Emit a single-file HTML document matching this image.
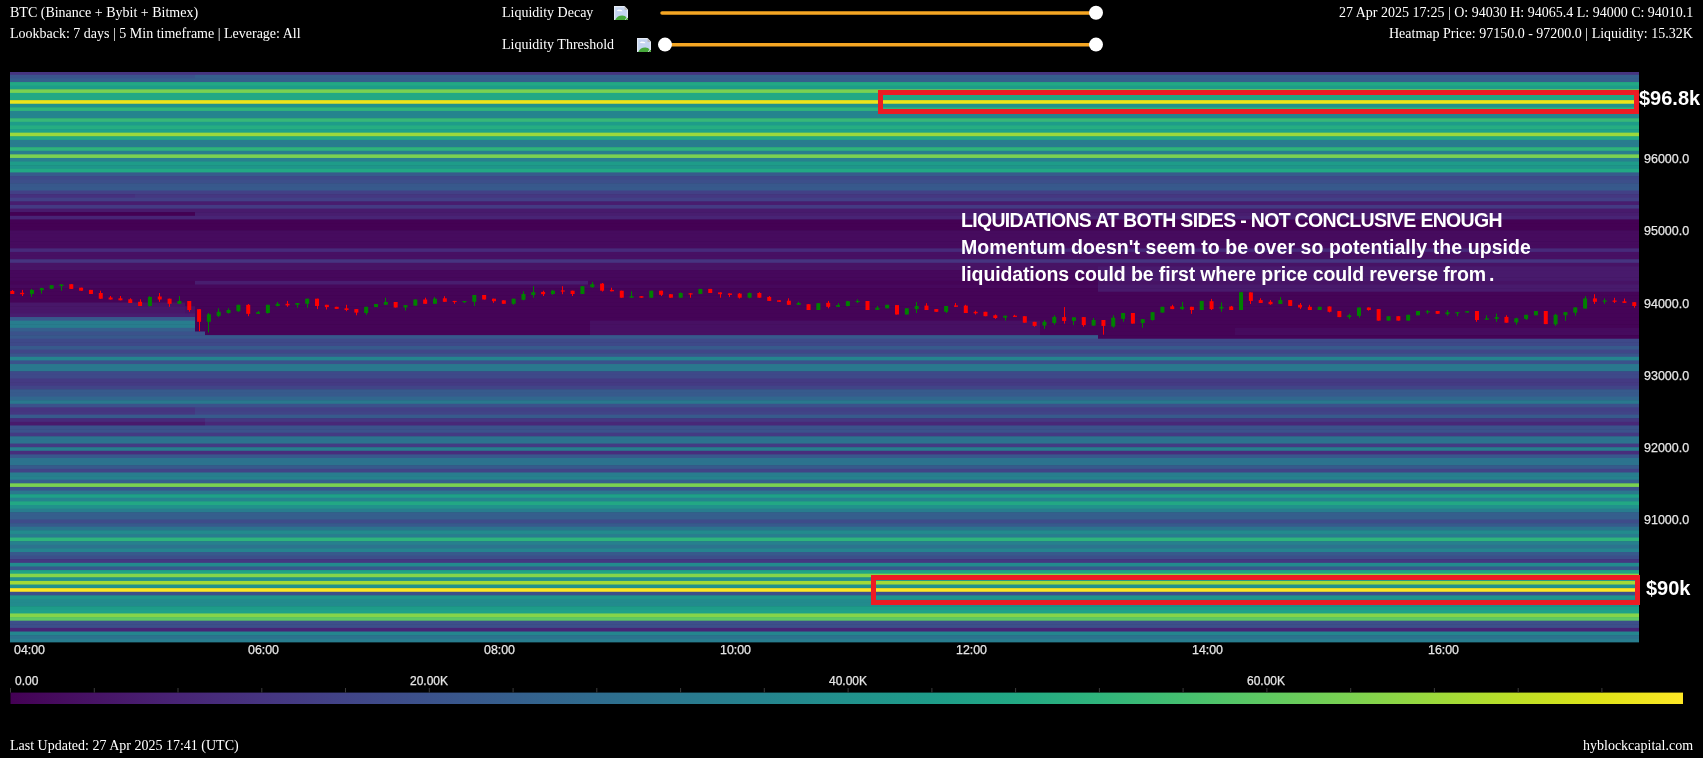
<!DOCTYPE html>
<html><head><meta charset="utf-8">
<style>
html,body{margin:0;padding:0;background:#000;}
body{width:1703px;height:758px;overflow:hidden;position:relative;}
.t{position:absolute;white-space:nowrap;color:#fff;font-family:"Liberation Serif",serif;font-size:14px;line-height:16px;}
.ax{position:absolute;white-space:nowrap;color:#e6e6e6;font-family:"Liberation Sans",sans-serif;font-size:12px;line-height:14px;-webkit-text-stroke:0.25px #e6e6e6;}
.ann{position:absolute;white-space:nowrap;color:#fff;font-family:"Liberation Sans",sans-serif;font-weight:bold;font-size:19.5px;line-height:20px;}
svg{position:absolute;left:0;top:0;}
.t,.ax,.ann{will-change:transform;}
</style></head><body>
<svg width="1703" height="758" viewBox="0 0 1703 758">
<defs><linearGradient id="cb" x1="0" x2="1" y1="0" y2="0"><stop offset="0.000" stop-color="#440154"/><stop offset="0.050" stop-color="#471365"/><stop offset="0.100" stop-color="#482475"/><stop offset="0.150" stop-color="#463480"/><stop offset="0.200" stop-color="#414487"/><stop offset="0.250" stop-color="#3b528b"/><stop offset="0.300" stop-color="#355f8d"/><stop offset="0.350" stop-color="#2f6c8e"/><stop offset="0.400" stop-color="#2a788e"/><stop offset="0.450" stop-color="#25848e"/><stop offset="0.500" stop-color="#21918c"/><stop offset="0.550" stop-color="#1e9c89"/><stop offset="0.600" stop-color="#22a884"/><stop offset="0.650" stop-color="#2fb47c"/><stop offset="0.700" stop-color="#44bf70"/><stop offset="0.750" stop-color="#5ec962"/><stop offset="0.800" stop-color="#7ad151"/><stop offset="0.850" stop-color="#9bd93c"/><stop offset="0.900" stop-color="#bddf26"/><stop offset="0.950" stop-color="#dfe318"/><stop offset="1.000" stop-color="#fde725"/></linearGradient></defs>
<g>
<rect x="10" y="72.00" width="1629" height="3.41" fill="#463480"/>
<rect x="10" y="74.81" width="185.3" height="4.22" fill="#3a548c"/>
<rect x="195" y="74.81" width="1444" height="4.22" fill="#355f8d"/>
<rect x="10" y="78.43" width="1629" height="4.21" fill="#355f8d"/>
<rect x="10" y="82.05" width="1629" height="4.21" fill="#22a884"/>
<rect x="10" y="85.66" width="1629" height="4.22" fill="#1e9c89"/>
<rect x="10" y="89.28" width="1629" height="4.21" fill="#7ad151"/>
<rect x="10" y="92.89" width="1629" height="4.21" fill="#22a884"/>
<rect x="10" y="96.50" width="1629" height="4.22" fill="#22a884"/>
<rect x="10" y="100.12" width="1629" height="4.22" fill="#ece51b"/>
<rect x="10" y="103.74" width="1629" height="4.21" fill="#21918c"/>
<rect x="10" y="107.35" width="1629" height="4.21" fill="#2fb47c"/>
<rect x="10" y="110.97" width="1629" height="4.22" fill="#25848e"/>
<rect x="10" y="114.58" width="1629" height="4.21" fill="#25848e"/>
<rect x="10" y="118.20" width="1629" height="4.21" fill="#37b878"/>
<rect x="10" y="121.81" width="1629" height="4.22" fill="#1e9c89"/>
<rect x="10" y="125.43" width="1629" height="4.22" fill="#26ad81"/>
<rect x="10" y="129.04" width="1629" height="4.21" fill="#1fa188"/>
<rect x="10" y="132.66" width="1629" height="4.22" fill="#9bd93c"/>
<rect x="10" y="136.27" width="1629" height="4.21" fill="#22a884"/>
<rect x="10" y="139.88" width="1629" height="4.22" fill="#287d8e"/>
<rect x="10" y="143.50" width="1629" height="4.22" fill="#287d8e"/>
<rect x="10" y="147.12" width="1629" height="4.22" fill="#2fb47c"/>
<rect x="10" y="150.73" width="1629" height="4.22" fill="#287d8e"/>
<rect x="10" y="154.35" width="1629" height="4.21" fill="#7ad151"/>
<rect x="10" y="157.96" width="1629" height="4.21" fill="#27808e"/>
<rect x="10" y="161.57" width="1629" height="4.22" fill="#1e9c89"/>
<rect x="10" y="165.19" width="1629" height="4.22" fill="#1f958b"/>
<rect x="10" y="168.81" width="1629" height="4.22" fill="#22a884"/>
<rect x="10" y="172.42" width="1629" height="4.22" fill="#375a8c"/>
<rect x="10" y="176.04" width="1629" height="4.21" fill="#3e4989"/>
<rect x="10" y="179.65" width="1629" height="4.22" fill="#3c4f8a"/>
<rect x="10" y="183.27" width="1629" height="4.21" fill="#38588c"/>
<rect x="10" y="186.88" width="1629" height="4.22" fill="#375a8c"/>
<rect x="10" y="190.50" width="1629" height="4.22" fill="#424086"/>
<rect x="10" y="194.11" width="125.3" height="4.22" fill="#46307e"/>
<rect x="135" y="194.11" width="1504" height="4.22" fill="#453781"/>
<rect x="10" y="197.73" width="1629" height="4.22" fill="#424086"/>
<rect x="10" y="201.34" width="1629" height="4.21" fill="#481d6f"/>
<rect x="10" y="204.95" width="1629" height="4.22" fill="#443a83"/>
<rect x="10" y="208.57" width="1629" height="4.22" fill="#481a6c"/>
<rect x="10" y="212.19" width="185.3" height="4.22" fill="#440154"/>
<rect x="195" y="212.19" width="1444" height="4.22" fill="#481d6f"/>
<rect x="10" y="215.80" width="1629" height="4.22" fill="#482475"/>
<rect x="10" y="219.42" width="1629" height="4.22" fill="#440154"/>
<rect x="10" y="223.03" width="1629" height="4.22" fill="#440154"/>
<rect x="10" y="226.65" width="1629" height="4.21" fill="#440154"/>
<rect x="10" y="230.26" width="1629" height="4.22" fill="#460b5e"/>
<rect x="10" y="233.88" width="1629" height="4.22" fill="#460b5e"/>
<rect x="10" y="237.49" width="1629" height="4.22" fill="#460b5e"/>
<rect x="10" y="241.11" width="1629" height="4.22" fill="#460b5e"/>
<rect x="10" y="244.72" width="1629" height="4.22" fill="#460b5e"/>
<rect x="10" y="248.34" width="1629" height="4.21" fill="#472a7a"/>
<rect x="10" y="251.95" width="1629" height="4.22" fill="#471063"/>
<rect x="10" y="255.56" width="1629" height="4.22" fill="#471063"/>
<rect x="10" y="259.18" width="1629" height="4.22" fill="#463480"/>
<rect x="10" y="262.80" width="1629" height="4.22" fill="#471365"/>
<rect x="10" y="266.41" width="1088.3" height="4.22" fill="#471365"/>
<rect x="1098" y="266.41" width="541" height="4.22" fill="#481a6c"/>
<rect x="10" y="270.03" width="1088.3" height="4.21" fill="#46085c"/>
<rect x="1098" y="270.03" width="541" height="4.21" fill="#481a6c"/>
<rect x="10" y="273.64" width="1088.3" height="4.22" fill="#46085c"/>
<rect x="1098" y="273.64" width="541" height="4.22" fill="#481a6c"/>
<rect x="10" y="277.25" width="1088.3" height="4.22" fill="#46085c"/>
<rect x="1098" y="277.25" width="541" height="4.22" fill="#481a6c"/>
<rect x="10" y="280.87" width="185.3" height="4.22" fill="#450457"/>
<rect x="195" y="280.87" width="393.3" height="4.22" fill="#481d6f"/>
<rect x="588" y="280.87" width="510.3" height="4.22" fill="#450457"/>
<rect x="1098" y="280.87" width="541" height="4.22" fill="#471365"/>
<rect x="10" y="284.49" width="1088.3" height="4.22" fill="#46085c"/>
<rect x="1098" y="284.49" width="541" height="4.22" fill="#481a6c"/>
<rect x="10" y="288.10" width="1088.3" height="4.22" fill="#450457"/>
<rect x="1098" y="288.10" width="541" height="4.22" fill="#481a6c"/>
<rect x="10" y="291.72" width="1629" height="4.22" fill="#450457"/>
<rect x="10" y="295.33" width="1629" height="4.21" fill="#450457"/>
<rect x="10" y="298.94" width="1629" height="4.22" fill="#450457"/>
<rect x="10" y="302.56" width="130.3" height="4.22" fill="#481769"/>
<rect x="140" y="302.56" width="45.3" height="4.22" fill="#471365"/>
<rect x="185" y="302.56" width="1454" height="4.22" fill="#450457"/>
<rect x="10" y="306.18" width="175.3" height="4.22" fill="#481769"/>
<rect x="185" y="306.18" width="10.3" height="4.22" fill="#471365"/>
<rect x="195" y="306.18" width="1444" height="4.22" fill="#450457"/>
<rect x="10" y="309.79" width="175.3" height="4.22" fill="#481769"/>
<rect x="185" y="309.79" width="10.3" height="4.22" fill="#471365"/>
<rect x="195" y="309.79" width="1444" height="4.22" fill="#450457"/>
<rect x="10" y="313.41" width="185.3" height="4.22" fill="#481d6f"/>
<rect x="195" y="313.41" width="1444" height="4.22" fill="#450457"/>
<rect x="10" y="317.02" width="185.3" height="4.21" fill="#38588c"/>
<rect x="195" y="317.02" width="1444" height="4.21" fill="#450457"/>
<rect x="10" y="320.63" width="185.3" height="4.22" fill="#287d8e"/>
<rect x="195" y="320.63" width="395.3" height="4.22" fill="#450457"/>
<rect x="590" y="320.63" width="450.3" height="4.22" fill="#471063"/>
<rect x="1040" y="320.63" width="599" height="4.22" fill="#450457"/>
<rect x="10" y="324.25" width="185.3" height="4.22" fill="#287d8e"/>
<rect x="195" y="324.25" width="395.3" height="4.22" fill="#450457"/>
<rect x="590" y="324.25" width="450.3" height="4.22" fill="#471063"/>
<rect x="1040" y="324.25" width="599" height="4.22" fill="#450457"/>
<rect x="10" y="327.87" width="185.3" height="4.22" fill="#355f8d"/>
<rect x="195" y="327.87" width="395.3" height="4.22" fill="#450457"/>
<rect x="590" y="327.87" width="450.3" height="4.22" fill="#471063"/>
<rect x="1040" y="327.87" width="195.3" height="4.22" fill="#450457"/>
<rect x="1235" y="327.87" width="404" height="4.22" fill="#460b5e"/>
<rect x="10" y="331.48" width="195.3" height="4.22" fill="#3b528b"/>
<rect x="205" y="331.48" width="385.3" height="4.22" fill="#450457"/>
<rect x="590" y="331.48" width="450.3" height="4.22" fill="#471063"/>
<rect x="1040" y="331.48" width="195.3" height="4.22" fill="#450457"/>
<rect x="1235" y="331.48" width="404" height="4.22" fill="#460b5e"/>
<rect x="10" y="335.10" width="1088.3" height="4.21" fill="#38588c"/>
<rect x="1098" y="335.10" width="541" height="4.21" fill="#450457"/>
<rect x="10" y="338.71" width="1629" height="4.22" fill="#3e4989"/>
<rect x="10" y="342.32" width="1629" height="4.22" fill="#3e4989"/>
<rect x="10" y="345.94" width="1629" height="4.22" fill="#375a8c"/>
<rect x="10" y="349.56" width="1629" height="4.22" fill="#404688"/>
<rect x="10" y="353.17" width="1629" height="4.22" fill="#3a548c"/>
<rect x="10" y="356.79" width="1629" height="4.22" fill="#25848e"/>
<rect x="10" y="360.40" width="1629" height="4.21" fill="#3b528b"/>
<rect x="10" y="364.01" width="1629" height="4.22" fill="#2a788e"/>
<rect x="10" y="367.63" width="1629" height="4.22" fill="#2a788e"/>
<rect x="10" y="371.25" width="1629" height="4.22" fill="#3e4989"/>
<rect x="10" y="374.86" width="1629" height="4.22" fill="#3e4989"/>
<rect x="10" y="378.48" width="1629" height="4.22" fill="#443a83"/>
<rect x="10" y="382.09" width="1629" height="4.21" fill="#443a83"/>
<rect x="10" y="385.70" width="1629" height="4.22" fill="#414487"/>
<rect x="10" y="389.32" width="1629" height="4.22" fill="#375a8c"/>
<rect x="10" y="392.94" width="1629" height="4.22" fill="#375a8c"/>
<rect x="10" y="396.55" width="1629" height="4.22" fill="#31678e"/>
<rect x="10" y="400.17" width="1629" height="4.22" fill="#2a788e"/>
<rect x="10" y="403.78" width="1629" height="4.21" fill="#3b528b"/>
<rect x="10" y="407.39" width="185.3" height="4.22" fill="#463480"/>
<rect x="195" y="407.39" width="1444" height="4.22" fill="#424086"/>
<rect x="10" y="411.01" width="185.3" height="4.22" fill="#453781"/>
<rect x="195" y="411.01" width="1444" height="4.22" fill="#414487"/>
<rect x="10" y="414.62" width="1629" height="4.22" fill="#375a8c"/>
<rect x="10" y="418.24" width="195.3" height="4.22" fill="#472a7a"/>
<rect x="205" y="418.24" width="1434" height="4.22" fill="#453781"/>
<rect x="10" y="421.86" width="195.3" height="4.22" fill="#481a6c"/>
<rect x="205" y="421.86" width="1434" height="4.22" fill="#482878"/>
<rect x="10" y="425.47" width="1629" height="4.22" fill="#3b528b"/>
<rect x="10" y="429.09" width="1629" height="4.21" fill="#3b528b"/>
<rect x="10" y="432.70" width="1629" height="4.22" fill="#443a83"/>
<rect x="10" y="436.31" width="1629" height="4.22" fill="#2c738e"/>
<rect x="10" y="439.93" width="1629" height="4.22" fill="#2c738e"/>
<rect x="10" y="443.55" width="1629" height="4.22" fill="#443a83"/>
<rect x="10" y="447.16" width="1629" height="4.22" fill="#287d8e"/>
<rect x="10" y="450.78" width="1629" height="4.21" fill="#472e7c"/>
<rect x="10" y="454.39" width="1629" height="4.22" fill="#38588c"/>
<rect x="10" y="458.00" width="1629" height="4.22" fill="#2c738e"/>
<rect x="10" y="461.62" width="1629" height="4.22" fill="#2c738e"/>
<rect x="10" y="465.24" width="1629" height="4.22" fill="#375a8c"/>
<rect x="10" y="468.85" width="1629" height="4.22" fill="#414487"/>
<rect x="10" y="472.47" width="1629" height="4.21" fill="#287d8e"/>
<rect x="10" y="476.08" width="1629" height="4.22" fill="#26828e"/>
<rect x="10" y="479.69" width="1629" height="4.22" fill="#355f8d"/>
<rect x="10" y="483.31" width="1629" height="4.22" fill="#7ad151"/>
<rect x="10" y="486.93" width="1629" height="4.22" fill="#3b528b"/>
<rect x="10" y="490.54" width="1629" height="4.22" fill="#2a788e"/>
<rect x="10" y="494.16" width="1629" height="4.22" fill="#1fa188"/>
<rect x="10" y="497.77" width="1629" height="4.21" fill="#25848e"/>
<rect x="10" y="501.38" width="1629" height="4.22" fill="#22a884"/>
<rect x="10" y="505.00" width="1629" height="4.22" fill="#21918c"/>
<rect x="10" y="508.62" width="1629" height="4.22" fill="#287d8e"/>
<rect x="10" y="512.23" width="1629" height="4.22" fill="#355f8d"/>
<rect x="10" y="515.85" width="1629" height="4.22" fill="#355f8d"/>
<rect x="10" y="519.46" width="1629" height="4.22" fill="#3e4c8a"/>
<rect x="10" y="523.08" width="1629" height="4.22" fill="#375a8c"/>
<rect x="10" y="526.69" width="1629" height="4.22" fill="#2c738e"/>
<rect x="10" y="530.31" width="1629" height="4.22" fill="#228b8d"/>
<rect x="10" y="533.92" width="1629" height="4.22" fill="#287d8e"/>
<rect x="10" y="537.54" width="1629" height="4.22" fill="#2fb47c"/>
<rect x="10" y="541.15" width="1629" height="4.22" fill="#27808e"/>
<rect x="10" y="544.77" width="1629" height="4.21" fill="#2c738e"/>
<rect x="10" y="548.38" width="1629" height="4.22" fill="#25848e"/>
<rect x="10" y="552.00" width="1629" height="4.22" fill="#375a8c"/>
<rect x="10" y="555.61" width="1629" height="4.22" fill="#3c4f8a"/>
<rect x="10" y="559.23" width="1629" height="4.22" fill="#453781"/>
<rect x="10" y="562.84" width="1629" height="4.22" fill="#228b8d"/>
<rect x="10" y="566.46" width="1629" height="4.22" fill="#38588c"/>
<rect x="10" y="570.07" width="1629" height="4.22" fill="#20a386"/>
<rect x="10" y="573.69" width="1629" height="4.22" fill="#86d549"/>
<rect x="10" y="577.30" width="1629" height="4.22" fill="#21918c"/>
<rect x="10" y="580.92" width="1629" height="4.22" fill="#a2da37"/>
<rect x="10" y="584.53" width="1629" height="4.22" fill="#21918c"/>
<rect x="10" y="588.15" width="1629" height="4.22" fill="#fde725"/>
<rect x="10" y="591.76" width="1629" height="4.22" fill="#3c4f8a"/>
<rect x="10" y="595.38" width="1629" height="4.22" fill="#1f958b"/>
<rect x="10" y="598.99" width="1629" height="4.22" fill="#228b8d"/>
<rect x="10" y="602.61" width="1629" height="4.21" fill="#228b8d"/>
<rect x="10" y="606.22" width="1629" height="4.22" fill="#1e9c89"/>
<rect x="10" y="609.84" width="1629" height="4.22" fill="#1fa188"/>
<rect x="10" y="613.45" width="1629" height="4.22" fill="#86d549"/>
<rect x="10" y="617.07" width="1629" height="4.22" fill="#5ec962"/>
<rect x="10" y="620.68" width="1629" height="4.22" fill="#3c4f8a"/>
<rect x="10" y="624.30" width="1629" height="4.22" fill="#3c4f8a"/>
<rect x="10" y="627.91" width="1629" height="4.22" fill="#482475"/>
<rect x="10" y="631.53" width="1629" height="4.22" fill="#24868e"/>
<rect x="10" y="635.14" width="1629" height="4.22" fill="#2c738e"/>
<rect x="10" y="638.76" width="1629" height="3.62" fill="#287d8e"/>
</g>
<g>
<rect x="12" y="290.0" width="1" height="4.0" fill="#ff0000"/>
<rect x="10.30" y="291.0" width="4" height="3.0" fill="#ff0000"/>
<rect x="22" y="289.9" width="1" height="6.1" fill="#ff0000"/>
<rect x="20.13" y="292.8" width="4" height="1.4" fill="#ff0000"/>
<rect x="31" y="288.9" width="1" height="8.0" fill="#008000"/>
<rect x="29.96" y="289.9" width="4" height="4.0" fill="#008000"/>
<rect x="41" y="287.7" width="1" height="5.9" fill="#008000"/>
<rect x="39.79" y="288.1" width="4" height="2.2" fill="#008000"/>
<rect x="51" y="285.2" width="1" height="3.5" fill="#008000"/>
<rect x="49.62" y="285.2" width="4" height="3.5" fill="#008000"/>
<rect x="61" y="284.2" width="1" height="6.5" fill="#008000"/>
<rect x="59.45" y="284.5" width="4" height="1.5" fill="#008000"/>
<rect x="71" y="284.2" width="1" height="4.7" fill="#ff0000"/>
<rect x="69.28" y="284.2" width="4" height="4.7" fill="#ff0000"/>
<rect x="81" y="287.7" width="1" height="3.0" fill="#ff0000"/>
<rect x="79.11" y="287.7" width="4" height="3.0" fill="#ff0000"/>
<rect x="90" y="289.9" width="1" height="4.1" fill="#ff0000"/>
<rect x="88.94" y="289.9" width="4" height="4.1" fill="#ff0000"/>
<rect x="100" y="290.7" width="1" height="8.0" fill="#ff0000"/>
<rect x="98.77" y="293.0" width="4" height="5.7" fill="#ff0000"/>
<rect x="110" y="296.0" width="1" height="3.5" fill="#ff0000"/>
<rect x="108.60" y="297.5" width="4" height="2.0" fill="#ff0000"/>
<rect x="120" y="296.0" width="1" height="4.3" fill="#ff0000"/>
<rect x="118.43" y="298.3" width="4" height="2.0" fill="#ff0000"/>
<rect x="130" y="298.3" width="1" height="4.7" fill="#ff0000"/>
<rect x="128.26" y="299.3" width="4" height="3.7" fill="#ff0000"/>
<rect x="140" y="299.3" width="1" height="6.7" fill="#ff0000"/>
<rect x="138.09" y="301.8" width="4" height="4.2" fill="#ff0000"/>
<rect x="149" y="296.2" width="1" height="10.3" fill="#008000"/>
<rect x="147.92" y="296.9" width="4" height="9.1" fill="#008000"/>
<rect x="159" y="293.0" width="1" height="8.8" fill="#ff0000"/>
<rect x="157.75" y="296.5" width="4" height="3.0" fill="#ff0000"/>
<rect x="169" y="298.7" width="1" height="8.1" fill="#ff0000"/>
<rect x="167.58" y="298.7" width="4" height="5.1" fill="#ff0000"/>
<rect x="179" y="296.0" width="1" height="7.8" fill="#008000"/>
<rect x="177.41" y="301.0" width="4" height="2.8" fill="#008000"/>
<rect x="189" y="301.0" width="1" height="10.8" fill="#ff0000"/>
<rect x="187.24" y="301.0" width="4" height="9.0" fill="#ff0000"/>
<rect x="199" y="309.2" width="1" height="22.0" fill="#ff0000"/>
<rect x="197.07" y="309.2" width="4" height="12.6" fill="#ff0000"/>
<rect x="208" y="313.0" width="1" height="19.4" fill="#008000"/>
<rect x="206.90" y="314.2" width="4" height="7.6" fill="#008000"/>
<rect x="218" y="308.3" width="1" height="8.8" fill="#008000"/>
<rect x="216.73" y="311.8" width="4" height="4.1" fill="#008000"/>
<rect x="228" y="308.3" width="1" height="5.3" fill="#008000"/>
<rect x="226.56" y="310.0" width="4" height="3.0" fill="#008000"/>
<rect x="238" y="304.8" width="1" height="7.0" fill="#008000"/>
<rect x="236.39" y="304.8" width="4" height="6.4" fill="#008000"/>
<rect x="248" y="304.0" width="1" height="12.2" fill="#ff0000"/>
<rect x="246.22" y="304.8" width="4" height="9.0" fill="#ff0000"/>
<rect x="258" y="311.0" width="1" height="2.8" fill="#008000"/>
<rect x="256.05" y="312.2" width="4" height="1.6" fill="#008000"/>
<rect x="267" y="304.8" width="1" height="8.8" fill="#008000"/>
<rect x="265.88" y="304.8" width="4" height="8.2" fill="#008000"/>
<rect x="277" y="302.0" width="1" height="4.3" fill="#008000"/>
<rect x="275.71" y="303.8" width="4" height="2.2" fill="#008000"/>
<rect x="287" y="300.9" width="1" height="5.9" fill="#ff0000"/>
<rect x="285.54" y="303.8" width="4" height="1.6" fill="#ff0000"/>
<rect x="297" y="303.0" width="1" height="4.7" fill="#008000"/>
<rect x="295.37" y="303.0" width="4" height="1.8" fill="#008000"/>
<rect x="307" y="298.7" width="1" height="9.0" fill="#008000"/>
<rect x="305.20" y="298.7" width="4" height="5.1" fill="#008000"/>
<rect x="317" y="298.7" width="1" height="10.4" fill="#ff0000"/>
<rect x="315.03" y="298.7" width="4" height="7.3" fill="#ff0000"/>
<rect x="326" y="304.8" width="1" height="4.7" fill="#ff0000"/>
<rect x="324.86" y="304.8" width="4" height="2.3" fill="#ff0000"/>
<rect x="336" y="306.8" width="1" height="2.1" fill="#ff0000"/>
<rect x="334.69" y="306.8" width="4" height="2.1" fill="#ff0000"/>
<rect x="346" y="304.8" width="1" height="6.4" fill="#ff0000"/>
<rect x="344.52" y="308.3" width="4" height="1.7" fill="#ff0000"/>
<rect x="356" y="309.1" width="1" height="6.2" fill="#ff0000"/>
<rect x="354.35" y="309.1" width="4" height="3.5" fill="#ff0000"/>
<rect x="366" y="306.8" width="1" height="8.0" fill="#008000"/>
<rect x="364.18" y="306.8" width="4" height="6.2" fill="#008000"/>
<rect x="376" y="304.0" width="1" height="3.1" fill="#008000"/>
<rect x="374.01" y="304.0" width="4" height="3.1" fill="#008000"/>
<rect x="385" y="297.7" width="1" height="7.1" fill="#008000"/>
<rect x="383.84" y="302.0" width="4" height="2.8" fill="#008000"/>
<rect x="395" y="302.0" width="1" height="5.5" fill="#ff0000"/>
<rect x="393.67" y="302.0" width="4" height="5.5" fill="#ff0000"/>
<rect x="405" y="305.1" width="1" height="5.5" fill="#008000"/>
<rect x="403.50" y="305.1" width="4" height="2.4" fill="#008000"/>
<rect x="415" y="299.5" width="1" height="6.1" fill="#008000"/>
<rect x="413.33" y="299.5" width="4" height="6.1" fill="#008000"/>
<rect x="425" y="297.7" width="1" height="6.1" fill="#ff0000"/>
<rect x="423.16" y="299.5" width="4" height="4.3" fill="#ff0000"/>
<rect x="434" y="297.1" width="1" height="6.7" fill="#008000"/>
<rect x="432.99" y="298.7" width="4" height="5.1" fill="#008000"/>
<rect x="444" y="296.2" width="1" height="5.6" fill="#ff0000"/>
<rect x="442.82" y="298.3" width="4" height="3.5" fill="#ff0000"/>
<rect x="454" y="300.9" width="1" height="2.9" fill="#ff0000"/>
<rect x="452.65" y="300.9" width="4" height="1.2" fill="#ff0000"/>
<rect x="464" y="301.0" width="1" height="2.0" fill="#008000"/>
<rect x="462.48" y="301.0" width="4" height="1.2" fill="#008000"/>
<rect x="474" y="295.0" width="1" height="11.0" fill="#008000"/>
<rect x="472.31" y="295.0" width="4" height="6.8" fill="#008000"/>
<rect x="484" y="295.0" width="1" height="4.5" fill="#ff0000"/>
<rect x="482.14" y="295.0" width="4" height="4.5" fill="#ff0000"/>
<rect x="493" y="298.7" width="1" height="4.1" fill="#ff0000"/>
<rect x="491.97" y="298.7" width="4" height="2.5" fill="#ff0000"/>
<rect x="503" y="300.3" width="1" height="3.5" fill="#ff0000"/>
<rect x="501.80" y="300.3" width="4" height="3.5" fill="#ff0000"/>
<rect x="513" y="298.7" width="1" height="6.1" fill="#008000"/>
<rect x="511.63" y="298.7" width="4" height="5.1" fill="#008000"/>
<rect x="523" y="291.3" width="1" height="9.0" fill="#008000"/>
<rect x="521.46" y="294.0" width="4" height="5.8" fill="#008000"/>
<rect x="533" y="286.2" width="1" height="11.5" fill="#008000"/>
<rect x="531.29" y="292.2" width="4" height="2.8" fill="#008000"/>
<rect x="543" y="290.7" width="1" height="5.3" fill="#ff0000"/>
<rect x="541.12" y="291.9" width="4" height="2.3" fill="#ff0000"/>
<rect x="552" y="289.9" width="1" height="4.9" fill="#008000"/>
<rect x="550.95" y="290.7" width="4" height="3.3" fill="#008000"/>
<rect x="562" y="286.2" width="1" height="8.0" fill="#ff0000"/>
<rect x="560.78" y="290.4" width="4" height="1.2" fill="#ff0000"/>
<rect x="572" y="290.7" width="1" height="5.3" fill="#ff0000"/>
<rect x="570.61" y="290.7" width="4" height="3.3" fill="#ff0000"/>
<rect x="582" y="286.2" width="1" height="7.8" fill="#008000"/>
<rect x="580.44" y="286.2" width="4" height="7.8" fill="#008000"/>
<rect x="592" y="281.9" width="1" height="5.8" fill="#008000"/>
<rect x="590.27" y="284.2" width="4" height="3.0" fill="#008000"/>
<rect x="602" y="283.0" width="1" height="8.5" fill="#ff0000"/>
<rect x="600.10" y="283.6" width="4" height="7.1" fill="#ff0000"/>
<rect x="611" y="287.7" width="1" height="3.6" fill="#ff0000"/>
<rect x="609.93" y="289.9" width="4" height="1.4" fill="#ff0000"/>
<rect x="621" y="290.7" width="1" height="7.0" fill="#ff0000"/>
<rect x="619.76" y="290.7" width="4" height="7.0" fill="#ff0000"/>
<rect x="631" y="291.3" width="1" height="6.4" fill="#008000"/>
<rect x="629.59" y="296.2" width="4" height="1.5" fill="#008000"/>
<rect x="641" y="296.2" width="1" height="1.5" fill="#ff0000"/>
<rect x="639.42" y="296.2" width="4" height="1.5" fill="#ff0000"/>
<rect x="651" y="290.7" width="1" height="7.0" fill="#008000"/>
<rect x="649.25" y="290.7" width="4" height="7.0" fill="#008000"/>
<rect x="661" y="290.7" width="1" height="5.3" fill="#ff0000"/>
<rect x="659.08" y="290.7" width="4" height="4.1" fill="#ff0000"/>
<rect x="670" y="294.2" width="1" height="3.5" fill="#ff0000"/>
<rect x="668.91" y="294.2" width="4" height="3.5" fill="#ff0000"/>
<rect x="680" y="292.4" width="1" height="5.3" fill="#008000"/>
<rect x="678.74" y="293.0" width="4" height="4.7" fill="#008000"/>
<rect x="690" y="293.3" width="1" height="4.4" fill="#ff0000"/>
<rect x="688.57" y="293.3" width="4" height="1.2" fill="#ff0000"/>
<rect x="700" y="288.9" width="1" height="5.0" fill="#008000"/>
<rect x="698.40" y="288.9" width="4" height="5.0" fill="#008000"/>
<rect x="710" y="288.9" width="1" height="4.1" fill="#ff0000"/>
<rect x="708.23" y="288.9" width="4" height="4.1" fill="#ff0000"/>
<rect x="720" y="292.4" width="1" height="5.3" fill="#ff0000"/>
<rect x="718.06" y="292.4" width="4" height="1.8" fill="#ff0000"/>
<rect x="729" y="293.4" width="1" height="3.7" fill="#ff0000"/>
<rect x="727.89" y="293.4" width="4" height="1.6" fill="#ff0000"/>
<rect x="739" y="293.0" width="1" height="5.5" fill="#ff0000"/>
<rect x="737.72" y="293.6" width="4" height="4.1" fill="#ff0000"/>
<rect x="749" y="292.4" width="1" height="5.9" fill="#008000"/>
<rect x="747.55" y="293.0" width="4" height="4.7" fill="#008000"/>
<rect x="759" y="292.2" width="1" height="5.5" fill="#ff0000"/>
<rect x="757.38" y="293.0" width="4" height="4.7" fill="#ff0000"/>
<rect x="769" y="296.0" width="1" height="4.9" fill="#ff0000"/>
<rect x="767.21" y="296.9" width="4" height="4.0" fill="#ff0000"/>
<rect x="779" y="300.3" width="1" height="1.5" fill="#ff0000"/>
<rect x="777.04" y="300.3" width="4" height="1.5" fill="#ff0000"/>
<rect x="788" y="298.3" width="1" height="6.5" fill="#ff0000"/>
<rect x="786.87" y="300.7" width="4" height="4.1" fill="#ff0000"/>
<rect x="798" y="301.8" width="1" height="3.0" fill="#008000"/>
<rect x="796.70" y="303.0" width="4" height="1.8" fill="#008000"/>
<rect x="808" y="304.2" width="1" height="5.8" fill="#ff0000"/>
<rect x="806.53" y="304.2" width="4" height="5.8" fill="#ff0000"/>
<rect x="818" y="303.2" width="1" height="6.8" fill="#008000"/>
<rect x="816.36" y="303.2" width="4" height="6.8" fill="#008000"/>
<rect x="828" y="300.9" width="1" height="7.4" fill="#ff0000"/>
<rect x="826.19" y="302.8" width="4" height="4.0" fill="#ff0000"/>
<rect x="838" y="303.2" width="1" height="3.6" fill="#008000"/>
<rect x="836.02" y="305.1" width="4" height="1.7" fill="#008000"/>
<rect x="847" y="300.9" width="1" height="5.4" fill="#008000"/>
<rect x="845.85" y="301.2" width="4" height="4.8" fill="#008000"/>
<rect x="857" y="299.3" width="1" height="3.7" fill="#008000"/>
<rect x="855.68" y="300.9" width="4" height="1.2" fill="#008000"/>
<rect x="867" y="301.0" width="1" height="9.0" fill="#ff0000"/>
<rect x="865.51" y="301.0" width="4" height="9.0" fill="#ff0000"/>
<rect x="877" y="306.0" width="1" height="3.8" fill="#008000"/>
<rect x="875.34" y="307.7" width="4" height="2.1" fill="#008000"/>
<rect x="887" y="304.8" width="1" height="3.5" fill="#008000"/>
<rect x="885.17" y="304.8" width="4" height="3.5" fill="#008000"/>
<rect x="896" y="305.1" width="1" height="9.4" fill="#ff0000"/>
<rect x="895.00" y="305.1" width="4" height="9.4" fill="#ff0000"/>
<rect x="906" y="308.3" width="1" height="6.2" fill="#008000"/>
<rect x="904.83" y="308.3" width="4" height="6.2" fill="#008000"/>
<rect x="916" y="302.0" width="1" height="11.0" fill="#008000"/>
<rect x="914.66" y="306.0" width="4" height="3.1" fill="#008000"/>
<rect x="926" y="303.2" width="1" height="6.8" fill="#ff0000"/>
<rect x="924.49" y="305.6" width="4" height="4.4" fill="#ff0000"/>
<rect x="936" y="309.1" width="1" height="2.7" fill="#ff0000"/>
<rect x="934.32" y="309.1" width="4" height="2.7" fill="#ff0000"/>
<rect x="946" y="306.0" width="1" height="7.0" fill="#008000"/>
<rect x="944.15" y="306.0" width="4" height="5.8" fill="#008000"/>
<rect x="955" y="303.0" width="1" height="3.8" fill="#ff0000"/>
<rect x="953.98" y="305.4" width="4" height="1.4" fill="#ff0000"/>
<rect x="965" y="304.8" width="1" height="8.2" fill="#ff0000"/>
<rect x="963.81" y="305.6" width="4" height="7.4" fill="#ff0000"/>
<rect x="975" y="310.6" width="1" height="3.9" fill="#ff0000"/>
<rect x="973.64" y="311.8" width="4" height="1.5" fill="#ff0000"/>
<rect x="985" y="311.8" width="1" height="4.4" fill="#ff0000"/>
<rect x="983.47" y="311.8" width="4" height="4.4" fill="#ff0000"/>
<rect x="995" y="314.5" width="1" height="4.4" fill="#ff0000"/>
<rect x="993.30" y="315.3" width="4" height="2.7" fill="#ff0000"/>
<rect x="1005" y="315.7" width="1" height="4.9" fill="#008000"/>
<rect x="1003.13" y="315.7" width="4" height="2.0" fill="#008000"/>
<rect x="1014" y="314.8" width="1" height="2.1" fill="#ff0000"/>
<rect x="1012.96" y="315.7" width="4" height="1.2" fill="#ff0000"/>
<rect x="1024" y="316.2" width="1" height="6.5" fill="#ff0000"/>
<rect x="1022.79" y="316.2" width="4" height="6.5" fill="#ff0000"/>
<rect x="1034" y="321.8" width="1" height="4.9" fill="#ff0000"/>
<rect x="1032.62" y="321.8" width="4" height="4.1" fill="#ff0000"/>
<rect x="1044" y="320.0" width="1" height="8.8" fill="#008000"/>
<rect x="1042.45" y="321.8" width="4" height="3.8" fill="#008000"/>
<rect x="1054" y="315.3" width="1" height="9.4" fill="#008000"/>
<rect x="1052.28" y="316.9" width="4" height="6.1" fill="#008000"/>
<rect x="1064" y="307.1" width="1" height="16.5" fill="#ff0000"/>
<rect x="1062.11" y="317.1" width="4" height="3.8" fill="#ff0000"/>
<rect x="1073" y="317.3" width="1" height="7.8" fill="#008000"/>
<rect x="1071.94" y="317.3" width="4" height="3.6" fill="#008000"/>
<rect x="1083" y="317.1" width="1" height="9.6" fill="#ff0000"/>
<rect x="1081.77" y="317.1" width="4" height="8.0" fill="#ff0000"/>
<rect x="1093" y="318.0" width="1" height="7.9" fill="#008000"/>
<rect x="1091.60" y="320.0" width="4" height="5.6" fill="#008000"/>
<rect x="1103" y="320.0" width="1" height="14.7" fill="#ff0000"/>
<rect x="1101.43" y="320.0" width="4" height="5.9" fill="#ff0000"/>
<rect x="1113" y="315.3" width="1" height="12.4" fill="#008000"/>
<rect x="1111.26" y="317.7" width="4" height="8.8" fill="#008000"/>
<rect x="1123" y="313.0" width="1" height="8.8" fill="#008000"/>
<rect x="1121.09" y="313.0" width="4" height="5.9" fill="#008000"/>
<rect x="1132" y="313.0" width="1" height="10.6" fill="#ff0000"/>
<rect x="1130.92" y="313.0" width="4" height="10.6" fill="#ff0000"/>
<rect x="1142" y="319.2" width="1" height="8.5" fill="#008000"/>
<rect x="1140.75" y="319.2" width="4" height="3.8" fill="#008000"/>
<rect x="1152" y="312.2" width="1" height="8.4" fill="#008000"/>
<rect x="1150.58" y="312.2" width="4" height="7.8" fill="#008000"/>
<rect x="1162" y="306.8" width="1" height="5.8" fill="#008000"/>
<rect x="1160.41" y="306.8" width="4" height="5.8" fill="#008000"/>
<rect x="1172" y="304.8" width="1" height="4.3" fill="#ff0000"/>
<rect x="1170.24" y="306.3" width="4" height="2.8" fill="#ff0000"/>
<rect x="1182" y="302.0" width="1" height="8.0" fill="#008000"/>
<rect x="1180.07" y="306.8" width="4" height="2.3" fill="#008000"/>
<rect x="1191" y="306.8" width="1" height="7.0" fill="#ff0000"/>
<rect x="1189.90" y="306.8" width="4" height="3.2" fill="#ff0000"/>
<rect x="1201" y="300.9" width="1" height="9.1" fill="#008000"/>
<rect x="1199.73" y="300.9" width="4" height="9.1" fill="#008000"/>
<rect x="1211" y="298.9" width="1" height="11.1" fill="#ff0000"/>
<rect x="1209.56" y="301.2" width="4" height="7.9" fill="#ff0000"/>
<rect x="1221" y="302.4" width="1" height="9.4" fill="#008000"/>
<rect x="1219.39" y="306.8" width="4" height="1.8" fill="#008000"/>
<rect x="1231" y="305.9" width="1" height="4.1" fill="#ff0000"/>
<rect x="1229.22" y="306.5" width="4" height="3.5" fill="#ff0000"/>
<rect x="1241" y="292.2" width="1" height="17.8" fill="#008000"/>
<rect x="1239.05" y="292.2" width="4" height="17.8" fill="#008000"/>
<rect x="1250" y="292.4" width="1" height="11.6" fill="#ff0000"/>
<rect x="1248.88" y="292.4" width="4" height="8.5" fill="#ff0000"/>
<rect x="1260" y="298.3" width="1" height="4.7" fill="#ff0000"/>
<rect x="1258.71" y="300.1" width="4" height="2.9" fill="#ff0000"/>
<rect x="1270" y="300.1" width="1" height="4.7" fill="#ff0000"/>
<rect x="1268.54" y="301.8" width="4" height="2.4" fill="#ff0000"/>
<rect x="1280" y="297.1" width="1" height="6.9" fill="#008000"/>
<rect x="1278.37" y="300.1" width="4" height="3.9" fill="#008000"/>
<rect x="1290" y="300.1" width="1" height="5.8" fill="#ff0000"/>
<rect x="1288.20" y="300.1" width="4" height="5.8" fill="#ff0000"/>
<rect x="1300" y="303.0" width="1" height="6.1" fill="#ff0000"/>
<rect x="1298.03" y="304.8" width="4" height="2.7" fill="#ff0000"/>
<rect x="1309" y="304.8" width="1" height="5.2" fill="#ff0000"/>
<rect x="1307.86" y="306.8" width="4" height="3.2" fill="#ff0000"/>
<rect x="1319" y="306.8" width="1" height="3.2" fill="#008000"/>
<rect x="1317.69" y="306.8" width="4" height="3.2" fill="#008000"/>
<rect x="1329" y="306.5" width="1" height="5.9" fill="#ff0000"/>
<rect x="1327.52" y="306.5" width="4" height="5.3" fill="#ff0000"/>
<rect x="1339" y="311.0" width="1" height="6.1" fill="#ff0000"/>
<rect x="1337.35" y="311.0" width="4" height="6.1" fill="#ff0000"/>
<rect x="1349" y="313.8" width="1" height="5.1" fill="#008000"/>
<rect x="1347.18" y="315.3" width="4" height="1.8" fill="#008000"/>
<rect x="1359" y="307.5" width="1" height="10.2" fill="#008000"/>
<rect x="1357.01" y="307.5" width="4" height="8.4" fill="#008000"/>
<rect x="1368" y="307.5" width="1" height="3.1" fill="#ff0000"/>
<rect x="1366.84" y="307.5" width="4" height="2.5" fill="#ff0000"/>
<rect x="1378" y="309.1" width="1" height="11.5" fill="#ff0000"/>
<rect x="1376.67" y="309.1" width="4" height="11.5" fill="#ff0000"/>
<rect x="1388" y="316.2" width="1" height="4.4" fill="#008000"/>
<rect x="1386.50" y="316.2" width="4" height="4.4" fill="#008000"/>
<rect x="1398" y="316.2" width="1" height="4.4" fill="#ff0000"/>
<rect x="1396.33" y="316.2" width="4" height="4.4" fill="#ff0000"/>
<rect x="1408" y="314.8" width="1" height="5.8" fill="#008000"/>
<rect x="1406.16" y="314.8" width="4" height="5.8" fill="#008000"/>
<rect x="1417" y="311.0" width="1" height="4.3" fill="#008000"/>
<rect x="1415.99" y="311.0" width="4" height="4.3" fill="#008000"/>
<rect x="1427" y="310.0" width="1" height="3.8" fill="#008000"/>
<rect x="1425.82" y="311.2" width="4" height="1.2" fill="#008000"/>
<rect x="1437" y="311.0" width="1" height="2.8" fill="#ff0000"/>
<rect x="1435.65" y="311.0" width="4" height="2.8" fill="#ff0000"/>
<rect x="1447" y="310.0" width="1" height="5.7" fill="#008000"/>
<rect x="1445.48" y="312.2" width="4" height="2.0" fill="#008000"/>
<rect x="1457" y="312.2" width="1" height="4.0" fill="#008000"/>
<rect x="1455.31" y="312.2" width="4" height="1.2" fill="#008000"/>
<rect x="1467" y="311.2" width="1" height="1.4" fill="#008000"/>
<rect x="1465.14" y="311.2" width="4" height="1.4" fill="#008000"/>
<rect x="1476" y="311.0" width="1" height="10.8" fill="#ff0000"/>
<rect x="1474.97" y="311.0" width="4" height="9.0" fill="#ff0000"/>
<rect x="1486" y="315.3" width="1" height="4.4" fill="#008000"/>
<rect x="1484.80" y="318.3" width="4" height="1.4" fill="#008000"/>
<rect x="1496" y="313.6" width="1" height="8.2" fill="#008000"/>
<rect x="1494.63" y="317.1" width="4" height="1.8" fill="#008000"/>
<rect x="1506" y="315.3" width="1" height="7.4" fill="#ff0000"/>
<rect x="1504.46" y="316.9" width="4" height="5.8" fill="#ff0000"/>
<rect x="1516" y="317.7" width="1" height="7.0" fill="#008000"/>
<rect x="1514.29" y="318.3" width="4" height="4.1" fill="#008000"/>
<rect x="1526" y="314.8" width="1" height="5.2" fill="#008000"/>
<rect x="1524.12" y="314.8" width="4" height="4.1" fill="#008000"/>
<rect x="1535" y="311.0" width="1" height="4.3" fill="#008000"/>
<rect x="1533.95" y="311.0" width="4" height="4.3" fill="#008000"/>
<rect x="1545" y="311.0" width="1" height="13.1" fill="#ff0000"/>
<rect x="1543.78" y="311.0" width="4" height="13.1" fill="#ff0000"/>
<rect x="1555" y="313.8" width="1" height="12.1" fill="#008000"/>
<rect x="1553.61" y="314.8" width="4" height="9.6" fill="#008000"/>
<rect x="1565" y="312.1" width="1" height="8.7" fill="#008000"/>
<rect x="1563.44" y="312.1" width="4" height="3.2" fill="#008000"/>
<rect x="1575" y="307.4" width="1" height="8.3" fill="#008000"/>
<rect x="1573.27" y="307.4" width="4" height="5.3" fill="#008000"/>
<rect x="1585" y="296.1" width="1" height="12.5" fill="#008000"/>
<rect x="1583.10" y="298.4" width="4" height="10.1" fill="#008000"/>
<rect x="1594" y="294.2" width="1" height="9.7" fill="#ff0000"/>
<rect x="1592.93" y="298.4" width="4" height="3.4" fill="#ff0000"/>
<rect x="1604" y="298.4" width="1" height="5.5" fill="#008000"/>
<rect x="1602.76" y="300.5" width="4" height="1.2" fill="#008000"/>
<rect x="1614" y="297.8" width="1" height="5.2" fill="#ff0000"/>
<rect x="1612.59" y="300.5" width="4" height="1.3" fill="#ff0000"/>
<rect x="1624" y="298.5" width="1" height="4.4" fill="#ff0000"/>
<rect x="1622.42" y="301.3" width="4" height="1.6" fill="#ff0000"/>
<rect x="1634" y="302.2" width="1" height="5.5" fill="#ff0000"/>
<rect x="1632.25" y="302.2" width="4" height="3.8" fill="#ff0000"/>
</g>
<g fill="none" stroke="#ed1c24" stroke-width="5">
<rect x="880.5" y="92.5" width="756" height="19"/>
<rect x="873.5" y="577.5" width="764" height="25"/>
</g>
<rect x="10.5" y="692.6" width="1672.5" height="11.4" fill="url(#cb)"/>
<g stroke="#3a3a3a" stroke-width="1">
<line x1="10.5" y1="688" x2="10.5" y2="692.6"/><line x1="94.3" y1="688" x2="94.3" y2="692.6"/><line x1="178.0" y1="688" x2="178.0" y2="692.6"/><line x1="261.8" y1="688" x2="261.8" y2="692.6"/><line x1="345.5" y1="688" x2="345.5" y2="692.6"/><line x1="429.3" y1="688" x2="429.3" y2="692.6"/><line x1="513.1" y1="688" x2="513.1" y2="692.6"/><line x1="596.8" y1="688" x2="596.8" y2="692.6"/><line x1="680.6" y1="688" x2="680.6" y2="692.6"/><line x1="764.3" y1="688" x2="764.3" y2="692.6"/><line x1="848.1" y1="688" x2="848.1" y2="692.6"/><line x1="931.9" y1="688" x2="931.9" y2="692.6"/><line x1="1015.6" y1="688" x2="1015.6" y2="692.6"/><line x1="1099.4" y1="688" x2="1099.4" y2="692.6"/><line x1="1183.1" y1="688" x2="1183.1" y2="692.6"/><line x1="1266.9" y1="688" x2="1266.9" y2="692.6"/><line x1="1350.7" y1="688" x2="1350.7" y2="692.6"/><line x1="1434.4" y1="688" x2="1434.4" y2="692.6"/><line x1="1518.2" y1="688" x2="1518.2" y2="692.6"/><line x1="1601.9" y1="688" x2="1601.9" y2="692.6"/>
</g>
<!-- sliders -->
<line x1="662" y1="13" x2="1096" y2="13" stroke="#f5a623" stroke-width="3.5" stroke-linecap="round"/>
<circle cx="1096" cy="12.8" r="7" fill="#fff"/>
<line x1="665" y1="44.8" x2="1096" y2="44.8" stroke="#f5a623" stroke-width="3.5" stroke-linecap="round"/>
<circle cx="665" cy="44.6" r="7" fill="#fff"/>
<circle cx="1096" cy="44.6" r="7" fill="#fff"/>
<g transform="translate(614,6)">
<path d="M0 0 H10.5 L14 3.5 V11.5 L11.5 14 H0 Z" fill="#e6ecf6"/>
<path d="M1.2 1.2 H10 L12.8 4 V11 L10.8 14 H1.2 Z" fill="#c4d4f0"/>
<path d="M10.5 0 V4 H14 Z" fill="#bdbdbd"/>
<path d="M2.5 5 Q4 2.8 6 3.8 Q8.2 3.4 8.5 5.3 Z" fill="#fff"/>
<path d="M1.2 14 Q3.5 9.4 8.5 9.6 Q11 10 12.5 11.2 L10.8 14 Z" fill="#46a83a"/>
<path d="M12.3 13 L14 11.8 V14 H11.8 Z" fill="#5cb84a"/>
</g>
<g transform="translate(637,38)">
<path d="M0 0 H10.5 L14 3.5 V11.5 L11.5 14 H0 Z" fill="#e6ecf6"/>
<path d="M1.2 1.2 H10 L12.8 4 V11 L10.8 14 H1.2 Z" fill="#c4d4f0"/>
<path d="M10.5 0 V4 H14 Z" fill="#bdbdbd"/>
<path d="M2.5 5 Q4 2.8 6 3.8 Q8.2 3.4 8.5 5.3 Z" fill="#fff"/>
<path d="M1.2 14 Q3.5 9.4 8.5 9.6 Q11 10 12.5 11.2 L10.8 14 Z" fill="#46a83a"/>
<path d="M12.3 13 L14 11.8 V14 H11.8 Z" fill="#5cb84a"/>
</g>
</svg>

<div class="t" style="left:10px;top:5px;">BTC (Binance + Bybit + Bitmex)</div>
<div class="t" style="left:10px;top:26px;">Lookback: 7 days | 5 Min timeframe | Leverage: All</div>
<div class="t" style="left:502px;top:5px;">Liquidity Decay</div>
<div class="t" style="left:502px;top:37px;">Liquidity Threshold</div>
<div class="t" style="right:10px;top:5px;">27 Apr 2025 17:25 | O: 94030 H: 94065.4 L: 94000 C: 94010.1</div>
<div class="t" style="right:10px;top:26px;">Heatmap Price: 97150.0 - 97200.0 | Liquidity: 15.32K</div>

<div class="ax" style="left:1644px;top:152px;font-size:12.5px;">96000.0</div>
<div class="ax" style="left:1644px;top:224px;font-size:12.5px;">95000.0</div>
<div class="ax" style="left:1644px;top:297px;font-size:12.5px;">94000.0</div>
<div class="ax" style="left:1644px;top:369px;font-size:12.5px;">93000.0</div>
<div class="ax" style="left:1644px;top:441px;font-size:12.5px;">92000.0</div>
<div class="ax" style="left:1644px;top:513px;font-size:12.5px;">91000.0</div>

<div class="ax" style="left:14px;top:643px;font-size:12.4px;">04:00</div>
<div class="ax" style="left:248px;top:643px;font-size:12.4px;">06:00</div>
<div class="ax" style="left:484px;top:643px;font-size:12.4px;">08:00</div>
<div class="ax" style="left:720px;top:643px;font-size:12.4px;">10:00</div>
<div class="ax" style="left:956px;top:643px;font-size:12.4px;">12:00</div>
<div class="ax" style="left:1192px;top:643px;font-size:12.4px;">14:00</div>
<div class="ax" style="left:1428px;top:643px;font-size:12.4px;">16:00</div>

<div class="ax" style="left:15px;top:673.7px;">0.00</div>
<div class="ax" style="left:410px;top:673.7px;">20.00K</div>
<div class="ax" style="left:829px;top:673.7px;">40.00K</div>
<div class="ax" style="left:1247px;top:673.7px;">60.00K</div>

<div class="t" style="left:10px;top:738px;">Last Updated: 27 Apr 2025 17:41 (UTC)</div>
<div class="t" style="right:10px;top:738px;">hyblockcapital.com</div>

<div class="ann" style="left:961.3px;top:210px;letter-spacing:-0.68px;">LIQUIDATIONS AT BOTH SIDES - NOT CONCLUSIVE ENOUGH</div>
<div class="ann" style="left:961.3px;top:236.9px;letter-spacing:0.07px;">Momentum doesn't seem to be over so potentially the upside</div>
<div class="ann" style="left:961.3px;top:264.2px;letter-spacing:-0.12px;">liquidations could be first where price could reverse from<span style="margin-left:3px">.</span></div>

<div class="ann" style="left:1639px;top:88px;font-size:20px;">$96.8k</div>
<div class="ann" style="left:1646px;top:578px;font-size:20px;">$90k</div>
</body></html>
